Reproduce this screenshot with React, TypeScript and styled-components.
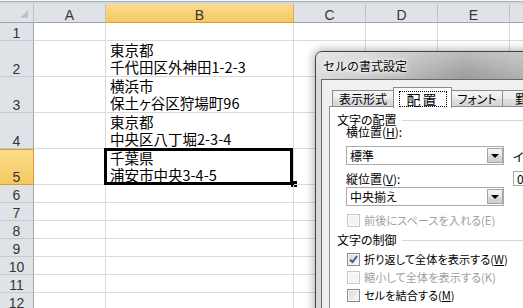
import React from "react";
import styled, { createGlobalStyle } from "styled-components";

const GlobalStyle = createGlobalStyle`
  html, body {
    margin: 0;
    padding: 0;
  }
  body {
    background: #fff;
    overflow: hidden;
    font-family: "Noto Sans CJK JP", "Noto Sans", sans-serif;
  }
`;

const Screen = styled.div`
  position: relative;
  width: 523px;
  height: 308px;
  overflow: hidden;
  background: #fff;
`;

const TopEdge = styled.div`
  height: 4px;
  background: linear-gradient(#f6f7f9 0 1px, #a9b0b9 1px 2px, #d3d8de 2px 4px);
`;

/* ---------- sheet ---------- */

const Row = styled.div<{ $h: number }>`
  display: flex;
  height: ${(p) => p.$h}px;
`;

const Corner = styled.div`
  box-sizing: border-box;
  flex: none;
  width: 34px;
  display: flex;
  justify-content: flex-end;
  align-items: flex-end;
  padding: 0 5px 4px 0;
  background: #dfe3e8;
  border-right: 1px solid #bcc2c9;
  border-bottom: 1px solid #9ea5ad;
  &::after {
    content: "";
    width: 0;
    height: 0;
    border-left: 8px solid transparent;
    border-bottom: 8px solid #bfc4ca;
  }
`;

const ColHead = styled.div<{ $w: number; $active?: boolean }>`
  box-sizing: border-box;
  flex: none;
  width: ${(p) => p.$w}px;
  display: flex;
  justify-content: center;
  align-items: flex-end;
  font-family: "Liberation Sans", Arial, sans-serif;
  font-size: 14px;
  line-height: 14px;
  color: #353535;
  background: ${(p) =>
    p.$active ? "linear-gradient(#fbdc8c, #f5c862)" : "#dfe3e8"};
  border-right: 1px solid ${(p) => (p.$active ? "#e3ad4a" : "#bcc2c9")};
  border-bottom: 1px solid ${(p) => (p.$active ? "#e19d2c" : "#9ea5ad")};
`;

const RowHead = styled.div<{ $active?: boolean }>`
  box-sizing: border-box;
  flex: none;
  width: 34px;
  display: flex;
  justify-content: center;
  align-items: flex-end;
  padding-bottom: 1px;
  font-family: "Liberation Sans", Arial, sans-serif;
  font-size: 14px;
  line-height: 12px;
  color: #353535;
  background: ${(p) =>
    p.$active ? "linear-gradient(#fbdc8c, #f5c862)" : "#dfe3e8"};
  border-right: 1px solid ${(p) => (p.$active ? "#e19d2c" : "#9ea5ad")};
  border-bottom: 1px solid ${(p) => (p.$active ? "#e19d2c" : "#c5cad0")};
  box-shadow: ${(p) => (p.$active ? "inset 0 1px 0 #e19d2c" : "none")};
`;

const Cell = styled.div<{ $w: number }>`
  box-sizing: border-box;
  position: relative;
  flex: none;
  width: ${(p) => p.$w}px;
  display: flex;
  flex-direction: column;
  justify-content: flex-end;
  padding: 0 4px 1px;
  font-size: 14.5px;
  line-height: 17px;
  font-feature-settings: "palt";
  color: #000;
  white-space: nowrap;
  border-right: 1px solid #dadada;
  border-bottom: 1px solid #dadada;
`;

const Selection = styled.div`
  position: absolute;
  left: -2px;
  top: -1px;
  right: 0;
  bottom: -1px;
  border: 3px solid #000;
  pointer-events: none;
`;

const FillHandle = styled.div`
  position: absolute;
  right: -5px;
  bottom: -4px;
  width: 7px;
  height: 7px;
  box-sizing: border-box;
  background: #000;
  border: 1px solid #fff;
  border-top: none;
  border-left: none;
`;

/* ---------- dialog ---------- */

const Dialog = styled.div`
  position: absolute;
  left: 315px;
  top: 51px;
  width: 260px;
  height: 300px;
  box-sizing: border-box;
  display: flex;
  flex-direction: column;
  border: 1px solid #3d4147;
  border-radius: 7px 7px 0 0;
  background: linear-gradient(rgba(255, 255, 255, 0.35), rgba(255, 255, 255, 0) 30px),
    linear-gradient(90deg, #dadada 0%, #c6c6c6 22%, #a4a4a4 48%, #979797 58%, #aaaaaa 78%, #b4b4b4 100%);
  box-shadow: 0 0 9px 2px rgba(0, 0, 0, 0.28);
`;

const TitleBar = styled.div`
  flex: none;
  height: 27px;
  padding-left: 7px;
  font-size: 12px;
  line-height: 27px;
  color: #000;
  text-shadow: 0 0 6px #fff, 0 0 3px #fff, 0 0 10px rgba(255, 255, 255, 0.8);
`;

const Client = styled.div`
  flex: 1;
  display: flex;
  flex-direction: column;
  margin-left: 5px;
  padding: 7px 0 0 7px;
  background: #f0f0f0;
  border-left: 1px solid #646a71;
  border-top: 1px solid #646a71;
  font-size: 12px;
  font-feature-settings: "palt";
  color: #000;
`;

const TabStrip = styled.div`
  display: flex;
  align-items: flex-end;
  height: 20px;
  padding-left: 3px;
  position: relative;
  z-index: 1;
`;

const Tab = styled.div<{ $w: number; $active?: boolean }>`
  box-sizing: border-box;
  flex: none;
  width: ${(p) => p.$w}px;
  height: ${(p) => (p.$active ? 21 : 17)}px;
  margin-right: -1px;
  margin-bottom: ${(p) => (p.$active ? -1 : 0)}px;
  display: flex;
  align-items: center;
  justify-content: center;
  border: 1px solid #898c95;
  border-bottom: ${(p) => (p.$active ? "none" : "1px solid #898c95")};
  background: ${(p) =>
    p.$active
      ? "#fff"
      : "linear-gradient(#f4f4f4, #ececec 50%, #e0e0e0 50%, #d6d6d6)"};
  position: relative;
  z-index: ${(p) => (p.$active ? 2 : 1)};
  line-height: 14px;
  white-space: nowrap;
  overflow: hidden;
`;

const Focus = styled.span`
  display: flex;
  align-items: center;
  justify-content: center;
  width: 46px;
  height: 14px;
  margin-top: 1px;
  border: 1px dotted #000;
  font-size: 14px;
  letter-spacing: 2px;
`;

const Panel = styled.div`
  flex: 1;
  display: flex;
  flex-direction: column;
  background: #fff;
  border: 1px solid #898c95;
  margin-top: -1px;
`;

const GroupHead = styled.div<{ $top: number }>`
  display: flex;
  align-items: center;
  height: 12px;
  line-height: 12px;
  padding-left: 7px;
  margin-top: ${(p) => p.$top}px;
  white-space: nowrap;
  &::after {
    content: "";
    flex: 1;
    height: 1px;
    margin-left: 5px;
    background: #d5d5d5;
  }
`;

const AlignRow = styled.div`
  display: flex;
  gap: 9px;
  padding-left: 16px;
`;

const Column = styled.div<{ $top?: number }>`
  display: flex;
  flex-direction: column;
  padding-top: ${(p) => p.$top ?? 0}px;
`;

const Label = styled.div<{ $top?: number }>`
  height: 12px;
  line-height: 12px;
  margin-top: ${(p) => p.$top ?? 0}px;
  white-space: nowrap;
`;

const Combo = styled.div<{ $top: number }>`
  box-sizing: border-box;
  width: 158px;
  height: 19px;
  margin-top: ${(p) => p.$top}px;
  display: flex;
  align-items: center;
  border: 1px solid #a7abb2;
  background: #fff;
  padding-left: 3px;
  line-height: 14px;
`;

const ComboText = styled.span`
  flex: 1;
`;

const DropButton = styled.span`
  box-sizing: border-box;
  flex: none;
  width: 16px;
  height: 15px;
  display: flex;
  align-items: center;
  justify-content: center;
  border: 1px solid #a4a4a4;
  background: linear-gradient(#f7f7f7, #e6e6e6 50%, #d8d8d8 51%, #cfcfcf);
  &::after {
    content: "";
    width: 0;
    height: 0;
    border-left: 4px solid transparent;
    border-right: 4px solid transparent;
    border-top: 4px solid #000;
  }
`;

const Spin = styled.div`
  box-sizing: border-box;
  width: 40px;
  height: 15px;
  margin-top: 8px;
  border: 1px solid #a7abb2;
  background: #fff;
  padding-left: 3px;
  line-height: 13px;
`;

const CheckRow = styled.div<{ $top: number; $disabled?: boolean }>`
  display: flex;
  align-items: center;
  gap: 4px;
  height: 13px;
  line-height: 13px;
  padding-left: 17px;
  margin-top: ${(p) => p.$top}px;
  white-space: nowrap;
  font-size: 11.2px;
  color: ${(p) => (p.$disabled ? "#a0a0a0" : "#000")};
`;

const Box = styled.span<{ $disabled?: boolean }>`
  box-sizing: border-box;
  flex: none;
  width: 13px;
  height: 13px;
  display: flex;
  align-items: center;
  justify-content: center;
  border: 1px solid ${(p) => (p.$disabled ? "#c7c7c7" : "#8e8f8f")};
  background: ${(p) =>
    p.$disabled ? "#f4f4f4" : "linear-gradient(135deg, #d4d6d9, #fbfbfb)"};
  box-shadow: inset 0 0 0 1px ${(p) => (p.$disabled ? "#fcfcfc" : "#f4f4f4")};
`;

const Mn = styled.span`
  text-decoration: underline;
  text-underline-offset: 1px;
`;

function Check({
  top,
  checked,
  disabled,
  children,
}: {
  top: number;
  checked?: boolean;
  disabled?: boolean;
  children: React.ReactNode;
}) {
  return (
    <CheckRow $top={top} $disabled={disabled}>
      <Box $disabled={disabled}>
        {checked && (
          <svg width="9" height="9" viewBox="0 0 9 9">
            <path
              d="M1 4.6 L3.4 7 L8 1.2"
              fill="none"
              stroke="#3f5a8f"
              strokeWidth="1.9"
            />
          </svg>
        )}
      </Box>
      <span>{children}</span>
    </CheckRow>
  );
}

const COLS = [
  { id: "A", w: 72 },
  { id: "B", w: 188 },
  { id: "C", w: 72 },
  { id: "D", w: 72 },
  { id: "E", w: 72 },
  { id: "F", w: 72 },
];

const ROWS: { n: number; h: number; b?: string[] }[] = [
  { n: 1, h: 18 },
  { n: 2, h: 36, b: ["東京都", "千代田区外神田1-2-3"] },
  { n: 3, h: 36, b: ["横浜市", "保土ヶ谷区狩場町96"] },
  { n: 4, h: 36, b: ["東京都", "中央区八丁堀2-3-4"] },
  { n: 5, h: 36, b: ["千葉県", "浦安市中央3-4-5"] },
  { n: 6, h: 18 },
  { n: 7, h: 18 },
  { n: 8, h: 18 },
  { n: 9, h: 18 },
  { n: 10, h: 18 },
  { n: 11, h: 18 },
  { n: 12, h: 18 },
];

export default function App() {
  return (
    <Screen>
      <GlobalStyle />
      <TopEdge />
      <Row $h={19}>
        <Corner />
        {COLS.map((c) => (
          <ColHead key={c.id} $w={c.w} $active={c.id === "B"}>
            {c.id}
          </ColHead>
        ))}
      </Row>
      {ROWS.map((r) => (
        <Row key={r.n} $h={r.h}>
          <RowHead $active={r.n === 5}>{r.n}</RowHead>
          {COLS.map((c) => (
            <Cell key={c.id} $w={c.w}>
              {c.id === "B" && r.b && r.b.map((t) => <div key={t}>{t}</div>)}
              {c.id === "B" && r.n === 5 && (
                <>
                  <Selection />
                  <FillHandle />
                </>
              )}
            </Cell>
          ))}
        </Row>
      ))}

      <Dialog>
        <TitleBar>セルの書式設定</TitleBar>
        <Client>
          <TabStrip>
            <Tab $w={62}>表示形式</Tab>
            <Tab $w={59} $active>
              <Focus>配置</Focus>
            </Tab>
            <Tab $w={52}>フォント</Tab>
            <Tab $w={50}>罫線</Tab>
          </TabStrip>
          <Panel>
            <GroupHead $top={7}>文字の配置</GroupHead>
            <AlignRow>
              <Column>
                <Label>
                  横位置(<Mn>H</Mn>):
                </Label>
                <Combo $top={8}>
                  <ComboText>標準</ComboText>
                  <DropButton />
                </Combo>
                <Label $top={8}>
                  縦位置(<Mn>V</Mn>):
                </Label>
                <Combo $top={2}>
                  <ComboText>中央揃え</ComboText>
                  <DropButton />
                </Combo>
              </Column>
              <Column $top={25}>
                <Label>
                  インデント(<Mn>I</Mn>):
                </Label>
                <Spin>0</Spin>
              </Column>
            </AlignRow>
            <Check top={8} disabled>
              前後にスペースを入れる(E)
            </Check>
            <GroupHead $top={7}>文字の制御</GroupHead>
            <Check top={7} checked>
              折り返して全体を表示する(<Mn>W</Mn>)
            </Check>
            <Check top={5} disabled>
              縮小して全体を表示する(K)
            </Check>
            <Check top={5}>
              セルを結合する(<Mn>M</Mn>)
            </Check>
          </Panel>
        </Client>
      </Dialog>
    </Screen>
  );
}
